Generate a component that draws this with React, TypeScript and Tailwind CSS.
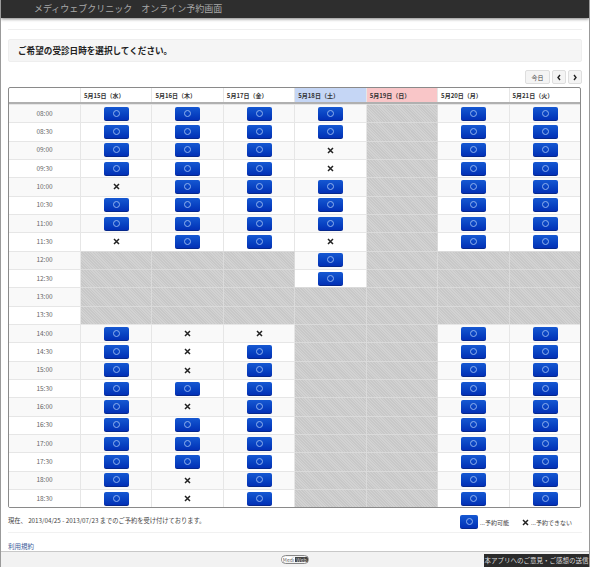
const ff = "font-['Noto_Sans_CJK_JP','Liberation_Sans',sans-serif]";

const days = [
  { label: "5月15日（水）", bg: "" },
  { label: "5月16日（木）", bg: "" },
  { label: "5月17日（金）", bg: "" },
  { label: "5月18日（土）", bg: "bg-[#c5d6f5]" },
  { label: "5月19日（日）", bg: "bg-[#f9c6c8]" },
  { label: "5月20日（月）", bg: "" },
  { label: "5月21日（火）", bg: "" },
];

const rows: [string, string][] = [
  ["08:00", "oooo-oo"],
  ["08:30", "oooo-oo"],
  ["09:00", "ooox-oo"],
  ["09:30", "ooox-oo"],
  ["10:00", "xooo-oo"],
  ["10:30", "oooo-oo"],
  ["11:00", "oooo-oo"],
  ["11:30", "xoox-oo"],
  ["12:00", "---o---"],
  ["12:30", "---o---"],
  ["13:00", "-------"],
  ["13:30", "-------"],
  ["14:00", "oxx--oo"],
  ["14:30", "oxo--oo"],
  ["15:00", "oxo--oo"],
  ["15:30", "ooo--oo"],
  ["16:00", "oxo--oo"],
  ["16:30", "ooo--oo"],
  ["17:00", "ooo--oo"],
  ["17:30", "ooo--oo"],
  ["18:00", "oxo--oo"],
  ["18:30", "oxo--oo"],
];

function Maru({ large }: { large?: boolean }) {
  return (
    <span
      className={
        "flex items-center justify-center rounded-[2px] bg-gradient-to-b from-[#1658d2] to-[#0430b6] border-b border-[#06288c] " +
        (large ? "w-[18px] h-[14px]" : "w-[25px] h-[14px]")
      }
    >
      <span className="block w-[7px] h-[7px] rounded-full border border-[#8fb0ee]" />
    </span>
  );
}

function Batsu() {
  return (
    <svg width="7" height="7" viewBox="0 0 7 7" aria-hidden="true">
      <path d="M1 1 L6 6 M6 1 L1 6" stroke="#222" strokeWidth="1.5" />
    </svg>
  );
}

function Cell({ v, odd, last }: { v: string; odd: boolean; last: boolean }) {
  const rb = last ? "" : " border-r";
  if (v === "-") {
    return (
      <div
        className={
          "border-t border-[#dadada] bg-[#cdcdcd] bg-[repeating-linear-gradient(45deg,#c8c8c8_0px,#c8c8c8_1px,#d2d2d2_1px,#d2d2d2_2px)]" + rb
        }
      />
    );
  }
  return (
    <div
      className={
        "flex items-center justify-center border-t border-[#e6e6e6] " +
        (odd ? "bg-white" : "bg-[#f9f9f9]") +
        rb
      }
    >
      {v === "o" ? <Maru /> : <Batsu />}
    </div>
  );
}

export default function App() {
  return (
    <div className={"w-[590px] h-[567px] relative overflow-hidden bg-white border-l border-r border-[#9a9a9a] text-[#333] " + ff}>
      <header className="h-[18px] bg-[#2e2e2e] shadow-[0_1px_3px_rgba(0,0,0,0.5)] pl-[33px] text-[#a8a8a8] text-[9px] leading-[18px] whitespace-pre">
        メディウェブクリニック　オンライン予約画面
      </header>

      <main className="pl-[7px] pr-[7px] pt-[11px]">
        <div className="border-t border-[#efefef] h-[10px]" />
        <div className="h-[23px] bg-[#f5f5f5] border border-[#eeeeee] rounded-[2px] pl-[9px] flex items-center text-[8.6px] font-bold text-[#222]">
          ご希望の受診日時を選択してください。
        </div>

        <div className="flex justify-end mt-[8px] h-[16px]">
          <div className="w-[25px] h-[14px] flex items-center justify-center rounded-[2px] border border-[#dedede] bg-[#f4f4f4] text-[6px] text-[#444]">
            今日
          </div>
          <div className="w-[14px] h-[14px] ml-[2px] flex items-center justify-center rounded-[2px] border border-[#dedede] bg-[#f4f4f4]">
            <svg width="6" height="7" viewBox="0 0 6 7" aria-hidden="true"><path d="M4 1 L2 3.5 L4 6" fill="none" stroke="#222" strokeWidth="1.4" /></svg>
          </div>
          <div className="w-[14px] h-[14px] ml-[2px] flex items-center justify-center rounded-[2px] border border-[#dedede] bg-[#f4f4f4]">
            <svg width="6" height="7" viewBox="0 0 6 7" aria-hidden="true"><path d="M2 1 L4 3.5 L2 6" fill="none" stroke="#222" strokeWidth="1.4" /></svg>
          </div>
        </div>

        <div className="mt-[1px] w-[573px] border border-[#8a8a8a] rounded-[2px] overflow-hidden">
          <div className="grid grid-cols-[72px_repeat(7,71.43px)] h-[16px] border-b-2 border-[#b0b0b0]">
            <div className="border-r border-[#e6e6e6]" />
            {days.map((d, i) => (
              <div
                key={d.label}
                className={"flex items-center pl-[3px] text-[6px] font-bold text-[#333] whitespace-nowrap " + d.bg + (i < 6 ? " border-r border-[#e6e6e6]" : "")}
              >
                {d.label}
              </div>
            ))}
          </div>
          {rows.map(([t, s], r) => (
            <div key={t} className="grid grid-cols-[72px_repeat(7,71.43px)] h-[18.33px]">
              <div className={"flex items-center justify-center border-t border-r border-[#e6e6e6] text-[6.5px] text-[#666] " + (r % 2 ? "bg-white" : "bg-[#f9f9f9]")}>
                {t}
              </div>
              {s.split("").map((v, i) => (
                <Cell key={i} v={v} odd={r % 2 === 1} last={i === 6} />
              ))}
            </div>
          ))}
        </div>

        <div className="flex items-center justify-between h-[20px] mt-[2px] text-[6.25px] text-[#444] whitespace-nowrap">
          <span>現在、 2013/04/25 - 2013/07/23 までのご予約を受け付けております。</span>
          <span className="flex items-center pr-[9px] pt-[4px] text-[6px]">
            <Maru large />
            <span className="ml-[2px] w-[42px]">...予約可能</span>
            <span className="mr-[2px]"><Batsu /></span>
            <span className="w-[42px]">...予約できない</span>
          </span>
        </div>

        <div className="border-t border-[#f1f1f1] mt-[2px] pt-[8px] text-[6.5px] leading-[10px] text-[#3b5a9a]">利用規約</div>
      </main>

      <footer className="absolute left-0 right-0 bottom-0 h-[16px] bg-[#f2f2f2] border-t border-[#c8c8c8] flex items-center justify-center">
        <span className="flex items-center h-[9px] w-[28px] rounded-full border border-[#888] overflow-hidden text-[5px] leading-none">
          <span className="flex-1 bg-white text-[#666] text-center">Medi</span>
          <span className="flex-1 bg-[#444] text-[#ccc] text-center">Web</span>
        </span>
        <span className="absolute right-0 bottom-0 h-[13px] w-[105px] bg-[#2b2b2b] text-[#dddddd] text-[6.5px] leading-[13px] text-center whitespace-nowrap">
          本アプリへのご意見・ご感想の送信
        </span>
      </footer>
    </div>
  );
}
